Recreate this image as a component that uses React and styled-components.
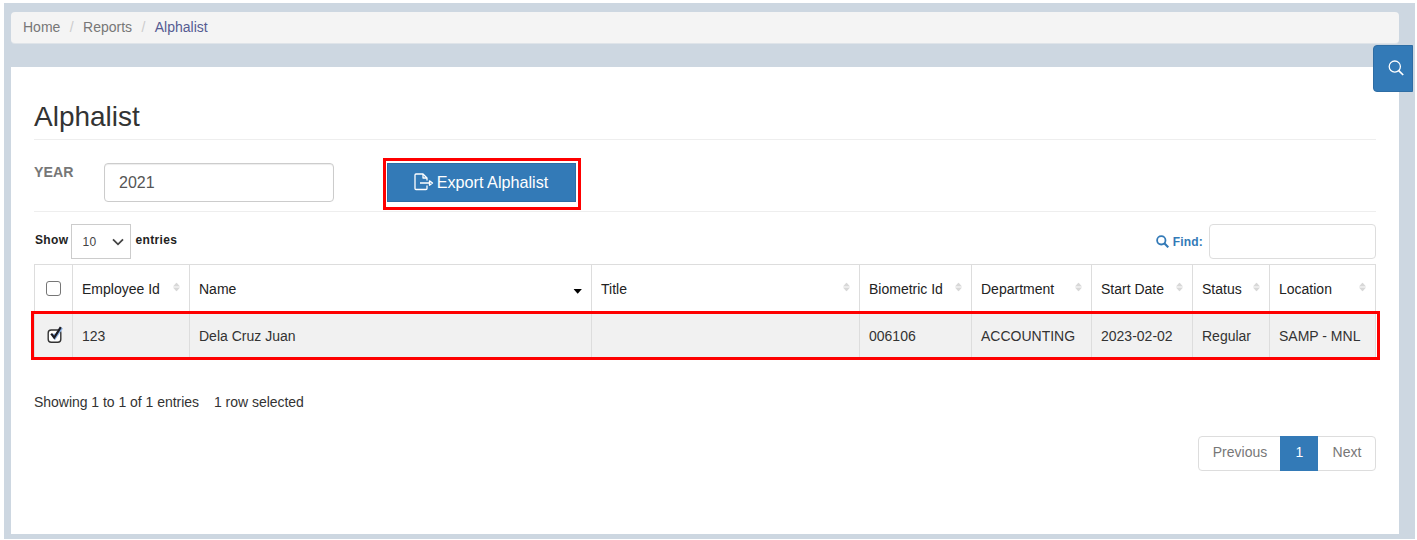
import React from "react";
import styled, { createGlobalStyle } from "styled-components";

const Global = createGlobalStyle`
  *, *::before, *::after { box-sizing: border-box; }
  body {
    margin: 0;
    background: #fff;
    font: 14px/20px "Liberation Sans", Arial, sans-serif;
    color: #333;
  }
`;

const Page = styled.div`
  position: relative;
  margin: 3px 2px 1px 4px;
  height: 536px;
  padding: 9px 16px 5px 7px;
  background: #cdd7e1;
`;

const Breadcrumb = styled.nav`
  display: flex;
  height: 31px;
  padding: 5px 12px;
  background: #f4f4f4;
  border-radius: 4px;
  box-shadow: 0 1px 0 #dfe4e9;
`;

const Crumb = styled.span`
  color: ${(p) => (p.$active ? "#555b92" : "#777")};
  &:not(:first-child)::before {
    content: "/";
    padding: 0 9.4px;
    color: #ccc;
  }
`;

const SearchTab = styled.button`
  position: absolute;
  top: 42px;
  right: 2px;
  width: 40px;
  height: 47px;
  padding: 0 0 2px 6px;
  display: flex;
  align-items: center;
  justify-content: center;
  border: 1px solid #2e6da4;
  border-radius: 4px 0 0 4px;
  background: #337ab7;
  color: #fff;
`;

const Panel = styled.main`
  margin-top: 24px;
  height: 467px;
  padding: 32px 23px 0 23px;
  background: #fff;
`;

const Title = styled.h1`
  margin: 0;
  height: 41px;
  padding-top: 1px;
  border-bottom: 1px solid #eee;
  font-size: 28px;
  line-height: 34px;
  font-weight: 400;
  color: #333;
`;

const FilterBar = styled.div`
  display: flex;
  align-items: flex-start;
  height: 72px;
  padding-top: 18px;
  border-bottom: 1px solid #eee;
`;

const FilterLabel = styled.label`
  width: 70px;
  padding-top: 4px;
  font-size: 14.2px;
  font-weight: 700;
  color: #777;
`;

const YearInput = styled.input`
  width: 230px;
  height: 39px;
  margin-top: 5px;
  padding: 0 14px;
  border: 1px solid #ccc;
  border-radius: 4px;
  box-shadow: inset 0 1px 1px rgba(0, 0, 0, 0.075);
  font: 16px "Liberation Sans", Arial, sans-serif;
  color: #555;
`;

const Highlight = styled.div`
  width: 198px;
  height: 52px;
  margin-left: 49px;
  padding: 2px 2px 0 1px;
  border: 3px solid #fe0000;
`;

const ExportButton = styled.button`
  width: 189px;
  height: 39px;
  display: flex;
  align-items: center;
  justify-content: center;
  gap: 3px;
  padding: 0 1px 2px 0;
  border: 1px solid #2e6da4;
  background: #337ab7;
  color: #fff;
  font: 16.2px/18px "Liberation Sans", Arial, sans-serif;
`;

const Toolbar = styled.div`
  display: flex;
  justify-content: space-between;
  height: 52px;
  padding-top: 12px;
`;

const ToolGroup = styled.label`
  display: flex;
  align-items: flex-start;
  padding-left: 1px;
  font-size: 12px;
  line-height: 18px;
  font-weight: 700;
  letter-spacing: ${(p) => (p.$link ? 0.2 : 0.36)}px;
  color: ${(p) => (p.$link ? "#337ab7" : "#222")};
`;

const ToolText = styled.span`
  padding-top: ${(p) => p.$top || 7}px;
`;

const LengthSelect = styled.span`
  display: flex;
  align-items: center;
  justify-content: space-between;
  width: 60px;
  height: 35px;
  margin: 0 4px 0 3px;
  padding: 0 6px 0 10px;
  border: 1px solid #ccc;
  color: #444;
  font-size: 12px;
  font-weight: 400;
`;

const FindInput = styled.input`
  width: 167px;
  height: 35px;
  margin-left: 6px;
  border: 1px solid #ddd;
  border-radius: 4px;
`;

const Table = styled.table`
  width: 1342px;
  table-layout: fixed;
  border-collapse: separate;
  border-spacing: 0;
  border-top: 1px solid #ddd;
  border-left: 1px solid #ddd;
`;

const HeadCell = styled.th`
  height: 48px;
  padding: 0 9px;
  border-right: 1px solid #ddd;
  border-bottom: 1px solid #ddd;
  font-weight: 400;
  text-align: left;
  color: #222;
`;

const HeadInner = styled.div`
  display: flex;
  align-items: center;
  justify-content: ${(p) => (p.$center ? "center" : "space-between")};
  white-space: nowrap;
`;

const SelectedRow = styled.tr`
  position: relative;
  background: #f1f1f1;
  &::after {
    content: "";
    position: absolute;
    inset: -2px -4px -2px -4px;
    border: 3px solid #fe0000;
    pointer-events: none;
  }
`;

const Cell = styled.td`
  height: 45px;
  padding: 0 0 0 9px;
  border-right: 1px solid #ddd;
  white-space: nowrap;
  color: #333;
`;

const Box = styled.span`
  display: block;
  width: 15px;
  height: 15px;
  border: 1px solid #767676;
  border-radius: 3px;
  background: #fff;
`;

const CheckedBox = styled.svg`
  display: block;
  margin: 0 0 1px 2px;
`;

const Summary = styled.div`
  display: flex;
  gap: 15px;
  margin-top: 34px;
  letter-spacing: -0.03px;
`;

const Pager = styled.div`
  display: flex;
  width: 178px;
  height: 35px;
  margin: 24px 0 0 auto;
  border: 1px solid #ddd;
  border-radius: 4px;
`;

const PageItem = styled.span`
  width: ${(p) => p.$w}px;
  margin: ${(p) => (p.$active ? "-1px 0" : "0")};
  padding: ${(p) => (p.$active ? 6 : 5)}px 0 0 1px;
  text-align: center;
  background: ${(p) => (p.$active ? "#337ab7" : "transparent")};
  color: ${(p) => (p.$active ? "#fff" : "#777")};
`;

const SortIcon = ({ active }) =>
  active ? (
    <svg width="9" height="5" viewBox="0 0 9 5" transform="translate(0.5 3)">
      <path d="M0 0h8.4L4.2 4.8z" fill="#000" />
    </svg>
  ) : (
    <svg width="7" height="9" viewBox="0 0 7 9" transform="translate(0 -1.5)">
      <path d="M0 4L3.5 0 7 4zM0 5h7L3.5 9z" fill="#d8d8d8" />
    </svg>
  );

const ExportIcon = () => (
  <svg width="20" height="18" viewBox="0 0 20 18" fill="none" stroke="#fff" strokeWidth="1.3" strokeLinejoin="round">
    <path d="M13 7.5V5L9 1H2Q1 1 1 2v13.5q0 1 1 1h10q1 0 1-1V12.5" />
    <path d="M9 1v4h4M6 10h9.5" />
    <path d="M15.5 7.8l3 2.2-3 2.2z" />
  </svg>
);

const columns = [
  ["Employee Id", 117],
  ["Name", 402],
  ["Title", 268],
  ["Biometric Id", 112],
  ["Department", 120],
  ["Start Date", 101],
  ["Status", 77],
  ["Location", 106],
];

const record = ["123", "Dela Cruz Juan", "", "006106", "ACCOUNTING", "2023-02-02", "Regular", "SAMP - MNL"];

export default function App() {
  return (
    <>
      <Global />
      <Page>
        <Breadcrumb>
          <Crumb>Home</Crumb>
          <Crumb>Reports</Crumb>
          <Crumb $active>Alphalist</Crumb>
        </Breadcrumb>
        <SearchTab aria-label="Search">
          <svg width="16" height="16" viewBox="0 0 16 16" fill="none" stroke="#fff" strokeWidth="1.3">
            <circle cx="6.8" cy="6.6" r="5.6" />
            <path d="M10.7 10.7l4.5 4.3" strokeWidth="1.7" />
          </svg>
        </SearchTab>
        <Panel>
          <Title>Alphalist</Title>
          <FilterBar>
            <FilterLabel htmlFor="year">YEAR</FilterLabel>
            <YearInput id="year" defaultValue="2021" />
            <Highlight>
              <ExportButton>
                <ExportIcon />
                Export Alphalist
              </ExportButton>
            </Highlight>
          </FilterBar>
          <Toolbar>
            <ToolGroup>
              <ToolText>Show</ToolText>
              <LengthSelect>
                10
                <svg width="12" height="8" viewBox="0 0 12 8" fill="none" stroke="#444" strokeWidth="1.8">
                  <path d="M1 1.3l5 5 5-5" />
                </svg>
              </LengthSelect>
              <ToolText>entries</ToolText>
            </ToolGroup>
            <ToolGroup $link>
              <ToolText $top={11}>
                <svg width="13" height="13" viewBox="0 0 13 13" fill="none" stroke="#337ab7" strokeWidth="1.8" display="block">
                  <circle cx="5.3" cy="5.3" r="4.2" />
                  <path d="M8.3 8.3l4 4" strokeWidth="2.2" />
                </svg>
              </ToolText>
              <ToolText $top={9}>&nbsp;Find:</ToolText>
              <FindInput />
            </ToolGroup>
          </Toolbar>
          <Table>
            <colgroup>
              <col width="38" />
              {columns.map(([name, width]) => (
                <col key={name} width={width} />
              ))}
            </colgroup>
            <thead>
              <tr>
                <HeadCell>
                  <HeadInner $center>
                    <Box />
                  </HeadInner>
                </HeadCell>
                {columns.map(([name]) => (
                  <HeadCell key={name}>
                    <HeadInner>
                      {name}
                      <SortIcon active={name === "Name"} />
                    </HeadInner>
                  </HeadCell>
                ))}
              </tr>
            </thead>
            <tbody>
              <SelectedRow>
                <Cell>
                  <CheckedBox width="18" height="18" viewBox="0 0 18 18" fill="none">
                    <rect x="2.2" y="4" width="12.6" height="12.3" rx="3" fill="#fff" stroke="#333" strokeWidth="1.4" />
                    <path d="M7 8.2l2 3.2 6.6-9.7" stroke="#8db4e8" strokeWidth="3.2" />
                    <path d="M5.2 7.6l3 4 6.6-10.4" stroke="#1c1c24" strokeWidth="2.2" />
                  </CheckedBox>
                </Cell>
                {record.map((value, i) => (
                  <Cell key={i}>{value}</Cell>
                ))}
              </SelectedRow>
            </tbody>
          </Table>
          <Summary>
            <span>Showing 1 to 1 of 1 entries</span>
            <span>1 row selected</span>
          </Summary>
          <Pager>
            <PageItem $w={81}>Previous</PageItem>
            <PageItem $w={38} $active>
              1
            </PageItem>
            <PageItem $w={57}>Next</PageItem>
          </Pager>
        </Panel>
      </Page>
    </>
  );
}
